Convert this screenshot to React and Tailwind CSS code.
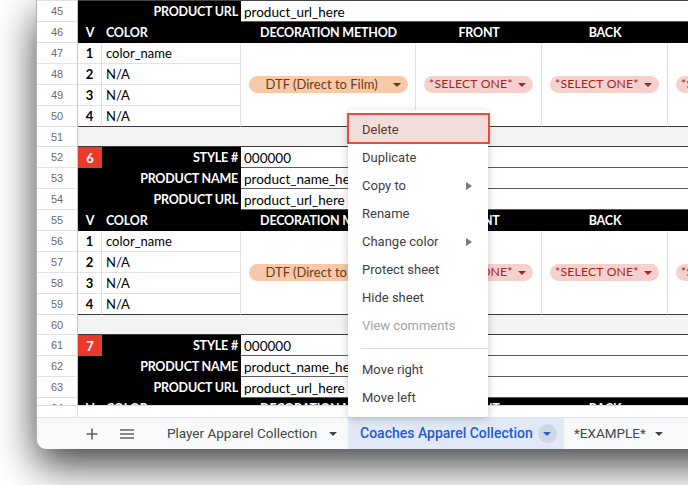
import React from "react";

const COLS = "grid grid-cols-[41px_24px_139px_175px_126px_126px_126px] auto-rows-[21px]";
const CELLF = "font-['Lato',sans-serif] pt-[2px]";

function RowHead({ n }) {
  return (
    <div className="flex items-center justify-center border-b border-r border-b-[#e2e2e2] border-r-[#c4c4c4] bg-white pt-[1px] text-[11px] text-[#6b6b6b] font-['Liberation_Sans',Arial,sans-serif]">
      {n}
    </div>
  );
}

function Caret({ color, w = 8, h = 4 }) {
  return (
    <svg width={w} height={h} viewBox="0 0 8 4" className="shrink-0">
      <path d="M0 0 L8 0 L4 4 Z" fill={color} />
    </svg>
  );
}

function DtfChip() {
  return (
    <div className="flex h-[17px] w-[159px] items-center justify-between rounded-full bg-[#f6c9a8] pl-[17px] pr-[7px]">
      <span className="font-['Lato',sans-serif] text-[13px] leading-none text-[#6b3a1b]">DTF (Direct to Film)</span>
      <Caret color="#6b3a1b" />
    </div>
  );
}

function SelChip() {
  return (
    <div className="flex h-[17px] w-[109px] items-center justify-between rounded-full bg-[#f6d0cc] pl-[5px] pr-[7px]">
      <span className="font-['Lato',sans-serif] text-[12.2px] leading-none tracking-[0.2px] text-[#a4251c]">*SELECT ONE*</span>
      <Caret color="#a4251c" />
    </div>
  );
}

const LBL = `${CELLF} text-[12.5px] tracking-[-0.2px] font-bold text-white whitespace-nowrap`;

function LabelRow({ n, label, value, num }) {
  return (
    <>
      <RowHead n={n} />
      {num ? (
        <>
          <div className={`flex items-center justify-center bg-[#e8392b] ${CELLF} text-[13px] font-bold text-white`}>{num}</div>
          <div className={`flex items-center justify-end bg-black pr-[3px] ${LBL}`}>{label}</div>
        </>
      ) : (
        <div className={`col-span-2 flex items-center justify-end bg-black pr-[3px] ${LBL}`}>{label}</div>
      )}
      <div className={`col-span-4 flex items-center border-b border-b-[#5b5b5b] bg-white pl-[3px] ${CELLF} text-[13.5px] text-black`}>
        {value}
      </div>
    </>
  );
}

function HeaderRow({ n }) {
  return (
    <>
      <RowHead n={n} />
      <div className={`flex items-center justify-center bg-black ${LBL}`}>V</div>
      <div className={`flex items-center bg-black pl-[4px] ${LBL}`}>COLOR</div>
      <div className={`flex items-center justify-center bg-black ${LBL}`}>DECORATION METHOD</div>
      <div className={`flex items-center justify-center bg-black ${LBL}`}>FRONT</div>
      <div className={`flex items-center justify-center bg-black ${LBL}`}>BACK</div>
      <div className="bg-black" />
    </>
  );
}

function ColorRows({ start }) {
  const names = ["color_name", "N/A", "N/A", "N/A"];
  return (
    <>
      {names.map((c, i) => {
        const last = i === 3;
        const bb = last ? "border-b-[#3a3a3a]" : "border-b-[#e2e2e2]";
        return (
          <React.Fragment key={i}>
            <RowHead n={start + i} />
            <div className={`flex items-center justify-center border-b border-r border-r-[#e2e2e2] ${bb} bg-white ${CELLF} text-[13px] font-bold text-black`}>{i + 1}</div>
            <div className={`flex items-center border-b border-r border-r-[#e2e2e2] ${bb} bg-white pl-[4px] ${CELLF} text-[13px] text-black`}>{c}</div>
            {i === 0 && (
              <>
                <div className="row-span-4 flex items-center justify-center border-b border-r border-b-[#3a3a3a] border-r-[#e2e2e2] bg-white">
                  <DtfChip />
                </div>
                <div className="row-span-4 flex items-center justify-center border-b border-r border-b-[#3a3a3a] border-r-[#e2e2e2] bg-white">
                  <SelChip />
                </div>
                <div className="row-span-4 flex items-center justify-center border-b border-r border-b-[#3a3a3a] border-r-[#e2e2e2] bg-white">
                  <SelChip />
                </div>
                <div className="row-span-4 flex items-center justify-center border-b border-r border-b-[#3a3a3a] border-r-[#e2e2e2] bg-white">
                  <SelChip />
                </div>
              </>
            )}
          </React.Fragment>
        );
      })}
    </>
  );
}

function Spacer({ n }) {
  return (
    <div className="flex h-[20px]">
      <div className="flex w-[41px] shrink-0 items-center justify-center border-b border-r border-b-[#e2e2e2] border-r-[#c4c4c4] bg-white pt-[1px] text-[11px] text-[#6b6b6b] font-['Liberation_Sans',Arial,sans-serif]">
        {n}
      </div>
      <div className="flex-1 border-b border-b-[#3a3a3a] bg-[#f3f3f3]" />
    </div>
  );
}

function Arrow() {
  return (
    <svg width="6" height="8" viewBox="0 0 6 8">
      <path d="M0 0 L6 4 L0 8 Z" fill="#7a7a7a" />
    </svg>
  );
}

function MenuItem({ label, sub, disabled }) {
  return (
    <div className="flex h-[28px] items-center justify-between pl-[14px] pr-[16px]">
      <span className={`font-['Roboto',sans-serif] text-[13px] ${disabled ? "text-[#a0a4a8]" : "text-[#3c4043]"}`}>{label}</span>
      {sub && <Arrow />}
    </div>
  );
}

export default function App() {
  return (
    <div className="relative h-[485px] w-[688px] overflow-hidden bg-white">
      <div className="ml-[36px] flex h-[449px] w-[720px] flex-col overflow-hidden rounded-bl-[10px] border-l border-l-[#b0b0b0] bg-white shadow-[0_16px_40px_rgba(0,0,0,0.75)]">
        <div className="h-[405px] overflow-hidden">
          <div className="flex h-[1px]">
            <div className="w-[41px] border-r border-r-[#c4c4c4] bg-[#e2e2e2]" />
            <div className="flex-1 bg-[#444]" />
          </div>
          <div className={COLS}>
            <LabelRow n={45} label="PRODUCT URL" value="product_url_here" />
            <HeaderRow n={46} />
            <ColorRows start={47} />
          </div>
          <Spacer n={51} />
          <div className={COLS}>
            <LabelRow n={52} num="6" label="STYLE #" value="000000" />
            <LabelRow n={53} label="PRODUCT NAME" value="product_name_here" />
            <LabelRow n={54} label="PRODUCT URL" value="product_url_here" />
            <HeaderRow n={55} />
            <ColorRows start={56} />
          </div>
          <Spacer n={60} />
          <div className={COLS}>
            <LabelRow n={61} num="7" label="STYLE #" value="000000" />
            <LabelRow n={62} label="PRODUCT NAME" value="product_name_here" />
            <LabelRow n={63} label="PRODUCT URL" value="product_url_here" />
            <HeaderRow n={64} />
          </div>
        </div>
        <div className="flex h-[12px] border-t border-t-[#dadce0] bg-white">
          <div className="w-[41px] border-r border-r-[#dadce0]" />
        </div>
        <div className="flex h-[32px] items-center whitespace-nowrap border-t border-t-[#e3e3e3] bg-[#f8f9fa] font-['Roboto',sans-serif]">
          <div className="ml-[43px] flex h-[24px] w-[24px] shrink-0 items-center justify-center">
            <svg width="12" height="12" viewBox="0 0 12 12">
              <path d="M6 0.5 V11.5 M0.5 6 H11.5" stroke="#5f6368" strokeWidth="1.6" />
            </svg>
          </div>
          <div className="ml-[11px] flex h-[24px] w-[24px] shrink-0 items-center justify-center">
            <svg width="14" height="10" viewBox="0 0 14 10">
              <path d="M0 1 H14 M0 5 H14 M0 9 H14" stroke="#5f6368" strokeWidth="1.5" />
            </svg>
          </div>
          <div className="ml-[16px] flex h-[32px] w-[193px] shrink-0 items-center pl-[12px]">
            <span className="text-[13.5px] text-[#444746]">Player Apparel Collection</span>
            <span className="ml-[12px]"><Caret color="#444746" /></span>
          </div>
          <div className="flex h-[32px] w-[216px] shrink-0 items-center bg-[#e1e9f7] pl-[12px]">
            <span className="text-[14px] font-medium text-[#1f5bd6]">Coaches Apparel Collection</span>
            <span className="ml-[5px] flex h-[19px] w-[19px] shrink-0 items-center justify-center rounded-full bg-[#cfd7e5]">
              <Caret color="#2c5fc4" />
            </span>
          </div>
          <div className="flex h-[32px] shrink-0 items-center pl-[10px]">
            <span className="text-[13.5px] text-[#444746]">*EXAMPLE*</span>
            <span className="ml-[9px]"><Caret color="#444746" /></span>
          </div>
        </div>
      </div>

      <div className="absolute left-[348px] top-[110px] w-[140px] rounded-[4px] bg-white pb-[5px] pt-[6px] shadow-[0_2px_8px_rgba(0,0,0,0.22)]">
        <MenuItem label="Delete" />
        <MenuItem label="Duplicate" />
        <MenuItem label="Copy to" sub />
        <MenuItem label="Rename" />
        <MenuItem label="Change color" sub />
        <MenuItem label="Protect sheet" />
        <MenuItem label="Hide sheet" />
        <MenuItem label="View comments" disabled />
        <div className="flex h-[16px] items-center pl-[13px]">
          <div className="h-[1px] w-full bg-[#dadce0]" />
        </div>
        <MenuItem label="Move right" />
        <MenuItem label="Move left" />
      </div>
      <div className="absolute left-[347px] top-[113px] flex h-[31px] w-[143px] items-center border-[2px] border-[#ea4b3c] bg-[#f1ddd9] pl-[13px] pt-[3px]">
        <span className="font-['Roboto',sans-serif] text-[13px] text-[#5a3a33]">Delete</span>
      </div>
    </div>
  );
}
